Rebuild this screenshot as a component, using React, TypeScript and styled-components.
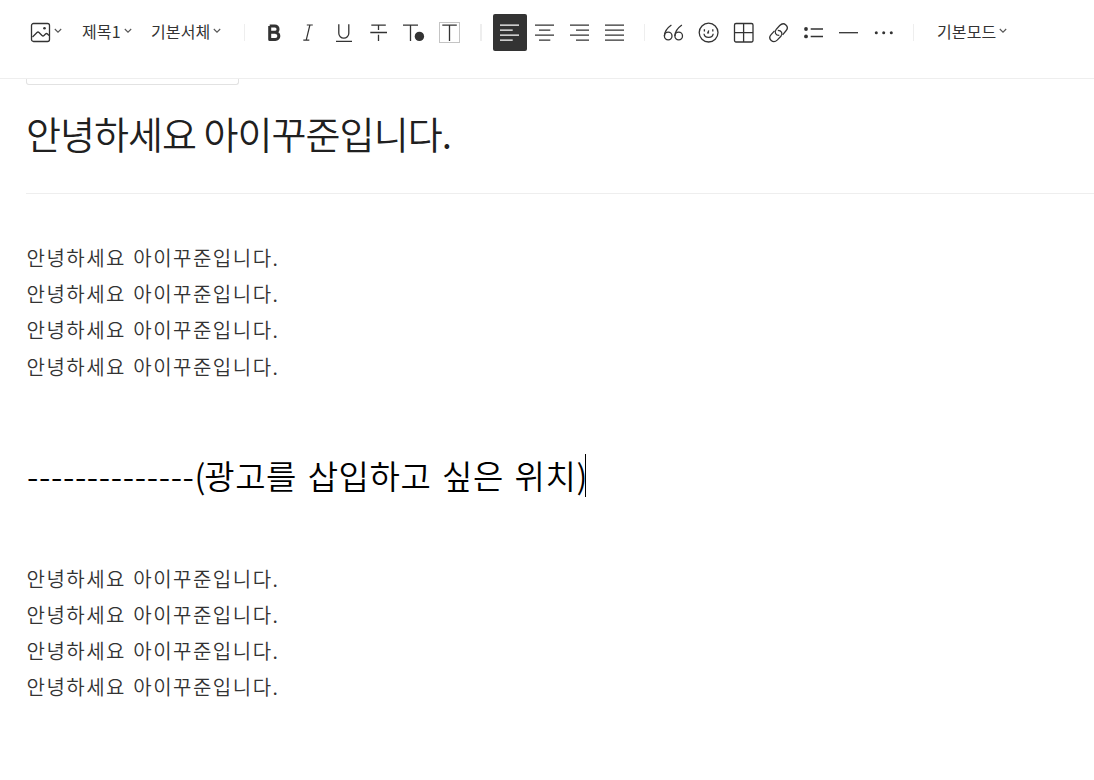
import React from 'react';
import styled, { createGlobalStyle } from 'styled-components';

const colors = {
  ink: '#333',
  title: '#202020',
  line: '#eee',
  white: '#fff',
};

const greeting = ['안녕하세요', '아이꾸준입니다.'];
const lines = [0, 1, 2, 3];

const Icon: React.FC<{ children: React.ReactNode }> = ({ children }) => (
  <svg width="34" height="37" viewBox="0 0 34 37" fill="none" stroke="currentColor" strokeWidth="1.3">
    {children}
  </svg>
);

const Chevron = () => (
  <ChevronSvg width="8" height="6" viewBox="0 0 8 6" fill="none" stroke="#555" strokeWidth="1.1">
    <path d="M.8 1 4 4.2 7.2 1" />
  </ChevronSvg>
);

const textIcons = [
  <path key="bold" d="M12.7 12h5.2a3.1 3.1 0 0 1 0 6.3h-5.2M18.4 18.5a3.4 3.4 0 0 1 0 6.9h-5.7V12" strokeWidth="3" strokeLinejoin="round" />,
  <path key="italic" d="M14.8 11h6M11.3 26.2h6M17.9 11l-3.7 15.2" strokeWidth="1.2" />,
  <path key="underline" d="M11.8 10.3v8.9a5 5 0 0 0 10 0v-8.9M9 27.4h16" />,
  <path key="strike" d="M9.3 11.2h14.5M16.5 11v5M8.3 18.5H25M16.5 20.7v6.2" />,
  <g key="color">
    <path d="M6 11.2h15M13.5 11v16" />
    <circle cx="22.4" cy="22.4" r="4.7" fill="currentColor" stroke="none" />
  </g>,
  <g key="background">
    <rect x="7.5" y="8.5" width="20" height="20" stroke="#c4c4c4" strokeWidth="1" />
    <path d="M10.3 11.2h14.5M17.5 11v16" />
  </g>,
];

const alignIcons = [
  <path key="left" d="M7 11.2h19M7 16.2h12.7M7 21.2h19M7 26.2h12.7" />,
  <path key="center" d="M7 11.2h19M11 16.2h11.3M7 21.2h19M11 26.2h11.3" />,
  <path key="right" d="M7 11.2h19M13 16.2h13M7 21.2h19M13 26.2h13" />,
  <path key="justify" d="M7 11.2h19M7 16.2h19M7 21.2h19M7 26.2h19" />,
];

const insertIcons = [
  <g key="quote">
    <circle cx="12.2" cy="22" r="3.8" />
    <circle cx="22.7" cy="22" r="3.8" />
    <path d="M8.4 22c0-4.6 3-8.2 7-11M18.9 22c0-4.6 3-8.2 7-11" />
  </g>,
  <g key="emoji">
    <circle cx="17.6" cy="18.6" r="9.4" />
    <path d="M13.4 15.3v2.2M21.8 15.3v2.2M17.8 16.5l-1 2.3h1.3M13 19.7c.5 4.8 8.7 4.8 9.2 0" />
  </g>,
  <path key="table" d="M10 9.5h15.5A1.5 1.5 0 0 1 27 11v15.5a1.5 1.5 0 0 1-1.5 1.5H10a1.5 1.5 0 0 1-1.5-1.5V11A1.5 1.5 0 0 1 10 9.5zM17.6 9.5V28M8.5 18.6H27" />,
  <g key="link">
    <path d="M18.3 21.4c-3.6.1-5.4-3.3-3.1-6l3.5-3.9c4.4-4.3 10 1.1 6.3 5.3l-3.4 4" />
    <path d="M16.8 16.3c3.6-.1 5.4 3.3 3.1 6l-3.5 3.6c-4.4 4.3-10-1.1-6.3-5.3l3.4-3.7" />
  </g>,
  <g key="list">
    <path d="M14.7 15H27M14.7 22.5H27" />
    <circle cx="10" cy="15" r="1.9" fill="currentColor" stroke="none" />
    <circle cx="10" cy="22.4" r="1.9" fill="currentColor" stroke="none" />
  </g>,
  <path key="rule" d="M8 18.7h19" />,
  <g key="more" fill="currentColor" stroke="none">
    <circle cx="10.3" cy="18.7" r="1.5" />
    <circle cx="17.7" cy="18.7" r="1.5" />
    <circle cx="25.3" cy="18.7" r="1.5" />
  </g>,
];

const Greeting = () => (
  <Paragraph>
    {lines.map((line) => (
      <Line key={line}>{greeting.join(' ')}</Line>
    ))}
  </Paragraph>
);

const App: React.FC = () => (
  <>
    <GlobalStyle />
    <Toolbar>
      <Select $left={30} $width={52}>
        <svg width="21" height="21" viewBox="0 0 21 21" fill="none" stroke="#333" strokeWidth="1.3">
          <rect x="1.5" y="1.5" width="18" height="18" rx="2" />
          <path d="m2.500 15 4.500-4.500q1-1 2 0l3 3q1 1 2 0l1.500-1.500q1-1 2 0l1.500 1.500" />
          <circle cx="14.5" cy="6.3" r="1.3" fill="#333" stroke="none" />
        </svg>
        <Chevron />
      </Select>
      <Select $width={69}><Label>제목1</Label><Chevron /></Select>
      <Select $width={93}><Label>기본서체</Label><Chevron /></Select>
      <Divider />
      <Group $left={12}>
        {textIcons.map((icon) => (
          <ToolButton key={icon.key}><Icon>{icon}</Icon></ToolButton>
        ))}
      </Group>
      <Divider $left={14} $width={2} />
      <Group $left={11}>
        {alignIcons.map((icon) => (
          <ToolButton key={icon.key} $active={icon.key === 'left'}><Icon>{icon}</Icon></ToolButton>
        ))}
      </Group>
      <Divider $left={12} />
      <Group $left={11}>
        {insertIcons.map((icon) => (
          <ToolButton key={icon.key}><Icon>{icon}</Icon></ToolButton>
        ))}
      </Group>
      <Divider $left={13} />
      <Select $left={23} $width={80}><Label>기본모드</Label><Chevron /></Select>
    </Toolbar>
    <Editor>
      <CategoryBox />
      <Title>{greeting.join(' ')}</Title>
      <Greeting />
      <Heading>
        <Dashes>--------------</Dashes>
        <Paren>(</Paren>광고를 삽입하고 싶은 위치)<Caret />
      </Heading>
      <Greeting />
    </Editor>
  </>
);

export default App;

const GlobalStyle = createGlobalStyle`
  * {
    box-sizing: border-box;
  }
  body {
    margin: 0;
    background: ${colors.white};
    color: ${colors.ink};
    font-family: 'Noto Sans CJK KR', sans-serif;
    overflow: hidden;
  }
`;

const Toolbar = styled.header`
  height: 79px;
  padding-top: 14px;
  border-bottom: 1px solid ${colors.line};
  display: flex;
  align-items: flex-start;
`;

const Select = styled.div<{ $left?: number; $width: number }>`
  width: ${({ $width }) => $width}px;
  height: 37px;
  margin-left: ${({ $left = 0 }) => $left}px;
  flex: none;
  display: flex;
  align-items: center;
  font-size: 16px;
  line-height: 24px;
  letter-spacing: 0.1px;
  white-space: nowrap;
`;

const Label = styled.span`
  padding-bottom: 4px;
`;

const ChevronSvg = styled.svg`
  flex: none;
  margin: 0 0 3px 3px;
`;

const Divider = styled.div<{ $left?: number; $width?: number }>`
  flex: none;
  width: ${({ $width = 1 }) => $width}px;
  height: 17px;
  margin: 10px 0 0 ${({ $left = 0 }) => $left}px;
  background: ${colors.line};
`;

const Group = styled.div<{ $left: number }>`
  display: flex;
  gap: 1px;
  margin-left: ${({ $left }) => $left}px;
`;

const ToolButton = styled.button<{ $active?: boolean }>`
  width: 34px;
  height: 37px;
  padding: 0;
  border: 0;
  border-radius: 2px;
  background: ${({ $active }) => ($active ? colors.ink : 'transparent')};
  color: ${({ $active }) => ($active ? colors.white : colors.ink)};
  svg {
    display: block;
  }
`;

const Editor = styled.main`
  padding-left: 26px;
`;

const CategoryBox = styled.div`
  width: 213px;
  height: 6px;
  border: 1px solid #e2e2e2;
  border-top: 0;
  border-radius: 0 0 3px 3px;
`;

const Title = styled.h1`
  height: 109px;
  margin: 0;
  padding-top: 20px;
  border-bottom: 1px solid ${colors.line};
  color: ${colors.title};
  font-size: 38px;
  font-weight: 350;
  line-height: 56px;
  letter-spacing: -0.95px;
  white-space: nowrap;
`;

const Paragraph = styled.div`
  padding: 46px 0 0 0.5px;
`;

const Line = styled.p`
  height: 36.2px;
  margin: 0;
  font-size: 20px;
  font-weight: 350;
  line-height: 36px;
  letter-spacing: 1.5px;
  word-spacing: 1.3px;
  white-space: nowrap;
`;

const Heading = styled.h2`
  height: 60px;
  margin: 61px 0 9px 1px;
  padding-bottom: 2px;
  display: flex;
  align-items: center;
  color: #000;
  font-size: 33px;
  font-weight: 350;
  line-height: 58px;
  letter-spacing: 0.6px;
  word-spacing: 2.6px;
  white-space: pre;
`;

const Dashes = styled.span`
  letter-spacing: 0.65px;
`;

const Paren = styled.span`
  letter-spacing: -1.3px;
`;

const Caret = styled.span`
  width: 1px;
  height: 43px;
  margin: 2px 0 0 -3px;
  background: #000;
`;
